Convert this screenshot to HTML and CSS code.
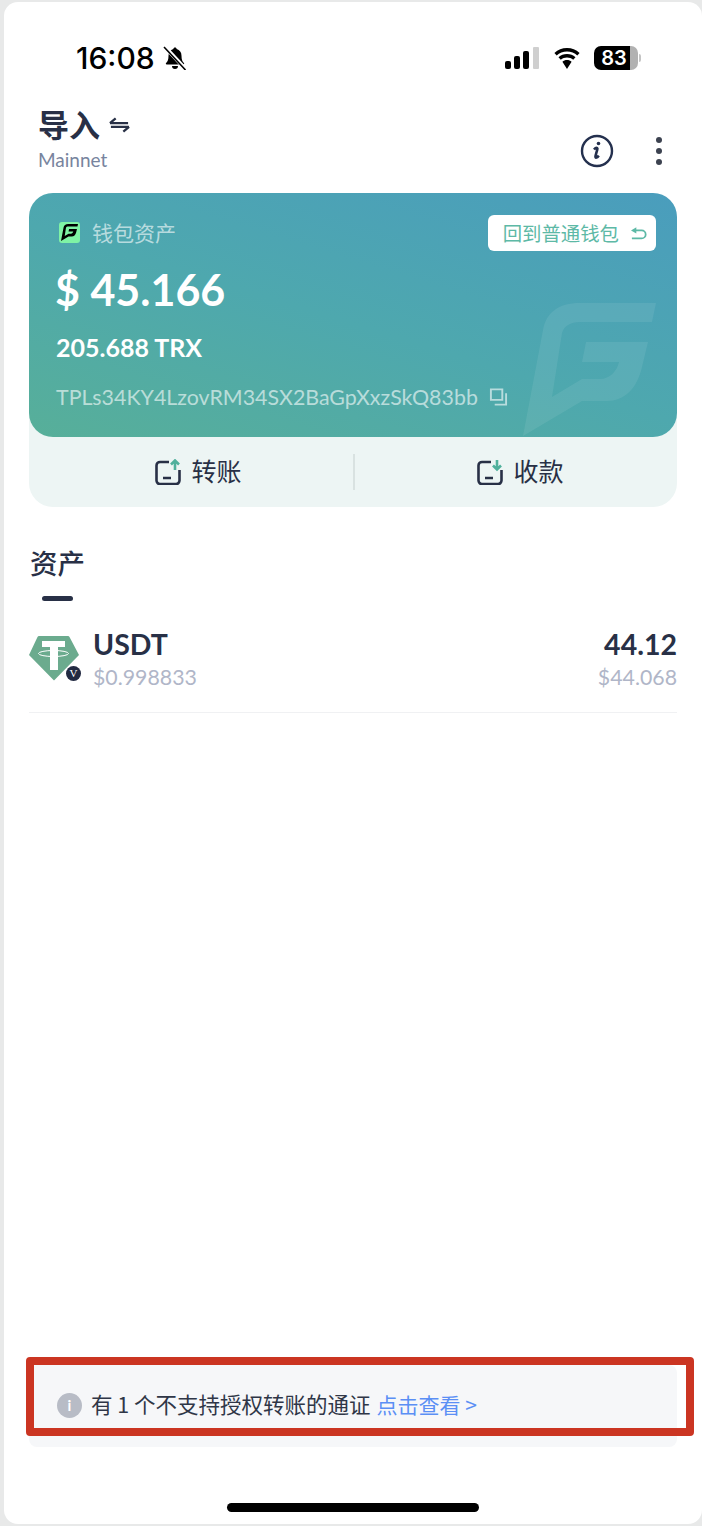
FILE: index.html
```html
<!DOCTYPE html>
<html lang="zh-CN">
<head>
<meta charset="utf-8">
<title>钱包资产</title>
<link rel="stylesheet" href="styles.css">
</head>
<body>
<main class="phone">
  <header class="status">
    <div class="status-left">
      <span class="time">16:08</span>
      <svg class="bell" viewBox="0 0 24 24"><path d="M12 1.500c-.9 0-1.600.7-1.700 1.600C7.300 3.900 5.500 6.500 5.500 9.800c0 3.700-.8 5.600-2.400 7.200-.6.600-.2 1.500.6 1.500h16.600c.8 0 1.200-.9.600-1.500-1.600-1.600-2.400-3.500-2.400-7.200 0-3.300-1.800-5.900-4.800-6.700-.1-.9-.8-1.600-1.700-1.600zM9 20a3 3 0 0 0 6 0z"/><path class="bell-gap" d="M2.500 1.500 22 22.500"/><path class="bell-line" d="M1 1l21.500 23"/></svg>
    </div>
    <div class="status-right">
      <svg class="signal" viewBox="0 0 34 22"><rect x="0" y="14" width="6" height="8" rx="2"/><rect x="9" y="9" width="6" height="13" rx="2"/><rect x="18" y="4" width="6" height="18" rx="2"/><rect class="signal-off" x="28" y="0" width="6" height="22" rx="1"/></svg>
      <svg class="wifi" viewBox="0 0 30 22"><path d="M15 4.500c4 0 7.600 1.500 10.300 4l2.300-2.600A18.500 18.500 0 0 0 15 1 18.500 18.500 0 0 0 2.400 5.900l2.300 2.600c2.700-2.500 6.300-4 10.300-4zM15 10.500c2.400 0 4.500.9 6.200 2.300l2.300-2.600A12.700 12.700 0 0 0 15 7a12.700 12.700 0 0 0-8.500 3.200l2.300 2.600c1.700-1.400 3.800-2.300 6.200-2.300zM15 13c-1.800 0-3.400.7-4.600 1.700L15 22l4.600-7.300C18.400 13.700 16.800 13 15 13z"/></svg>
      <div class="battery"><span class="battery-level">83</span><span class="battery-rest"></span><span class="battery-cap"></span></div>
    </div>
  </header>

  <section class="nav">
    <div class="nav-title">
      <h1 class="title">导入 <svg class="swap" viewBox="0 0 22 18"><path d="M1 7h19M1 7l6-5M21 11H2M21 11l-6 5"/></svg></h1>
      <p class="network">Mainnet</p>
    </div>
    <div class="nav-actions">
      <svg class="info" viewBox="0 0 34 34"><circle cx="17" cy="17" r="15"/><path class="info-i" d="M14 15.500c1-1.200 2.500-2 3.200-1.500.7.500.2 1.500-.3 3l-1.300 4.500c-.4 1.500 0 2.300.8 2.100.8-.2 1.600-1 2.400-2"/><circle class="info-dot" cx="18.500" cy="9.500" r="1.800"/></svg>
      <span class="dots"><i></i><i></i><i></i></span>
    </div>
  </section>

  <section class="wallet">
    <div class="wallet-card">
      <svg class="watermark" viewBox="0 0 133 133"><path d="M0 133 20 27C23 10 35 0 57 0H133L129 19H57C47 19 41 23 39 30L29 94 59 76H77C87 76 94 68 96 59H59L63 39H125L119 64C114 86 101 98 84 98H59Z"/></svg>
      <div class="card-top">
        <div class="card-label">
          <span class="logo"><svg viewBox="0 0 133 133"><path d="M0 133 20 27C23 10 35 0 57 0H133L129 19H57C47 19 41 23 39 30L29 94 59 76H77C87 76 94 68 96 59H59L63 39H125L119 64C114 86 101 98 84 98H59Z"/></svg></span>
          <span>钱包资产</span>
        </div>
        <div class="back-btn">回到普通钱包<svg class="back-icon" viewBox="0 0 18 14"><path class="back-stroke" d="M4 3.500h8a4.500 4.500 0 0 1 0 9H1"/><path class="back-fill" d="M0 3.500 6 0v7z"/></svg></div>
      </div>
      <div class="amount">$ 45.166</div>
      <div class="trx">205.688 TRX</div>
      <div class="address">TPLs34KY4LzovRM34SX2BaGpXxzSkQ83bb<svg class="copy" viewBox="0 0 20 18"><path d="M2 1h12v11H2z"/><path d="M18 5v12H6"/></svg></div>
    </div>
    <div class="actions">
      <div class="action action-send">
        <svg class="action-icon" viewBox="0 0 26 26"><path class="i-dark" d="M14 3H5a3.500 3.500 0 0 0-3.500 3.500v15A3.500 3.500 0 0 0 5 25h16a3.500 3.500 0 0 0 3.500-3.500V11M8 19h8"/><path class="i-green" d="M20 11V2M16 5.500 20 1.500l4 4"/></svg>
        <span>转账</span>
      </div>
      <div class="action action-receive">
        <svg class="action-icon" viewBox="0 0 26 26"><path class="i-dark" d="M14 3H5a3.500 3.500 0 0 0-3.500 3.500v15A3.500 3.500 0 0 0 5 25h16a3.500 3.500 0 0 0 3.500-3.500V11M8 19h8"/><path class="i-green" d="M20 1v9M16 6.500l4 4 4-4"/></svg>
        <span>收款</span>
      </div>
    </div>
  </section>

  <section class="assets">
    <h2 class="assets-tab">资产</h2>
    <span class="tab-bar"></span>
    <div class="asset-row">
      <div class="token">
        <svg class="token-icon" viewBox="0 0 50 46"><path class="t-bg" d="M10 1h29q1 0 1.500 1L50 20 25 45.500 0 20 8.500 2q.5-1 1.500-1z"/><path class="t-t" d="M13 6h23v6h-7v23h-8V12h-8z"/><ellipse class="t-ring" cx="24.500" cy="18.500" rx="15" ry="3"/></svg>
        <span class="badge">V</span>
      </div>
      <div class="asset-name">
        <div class="strong">USDT</div>
        <div class="muted">$0.998833</div>
      </div>
      <div class="asset-value">
        <div class="strong">44.12</div>
        <div class="muted">$44.068</div>
      </div>
    </div>
  </section>

  <aside class="notice">
    <span class="notice-i">i</span>
    <span class="notice-text">有 1 个不支持授权转账的通证</span>
    <span class="notice-link">点击查看 &gt;</span>
    <div class="highlight"></div>
  </aside>

  <div class="home"></div>
</main>
</body>
</html>
```
FILE: styles.css
```css
* { box-sizing: border-box; }
html, body { margin: 0; height: 100%; }
body {
  background: #e8e9e9;
  padding: 2px 0 2px 4px;
  font-family: "Lato", "Noto Sans CJK SC", sans-serif;
  color: #283046;
  overflow: hidden;
}
.phone {
  position: relative;
  height: 1522px;
  background: #fff;
  border-radius: 14px;
  display: flex;
  flex-direction: column;
  padding: 0 25px;
}
.status {
  display: flex;
  justify-content: space-between;
  align-items: center;
  height: 34px;
  margin-top: 39px;
  padding: 0 36px 0 47px;
}
.status-left, .status-right { display: flex; align-items: center; }
.time {
  font: 500 30px/34px "Inter", sans-serif;
  color: #000;
}
.bell { width: 24px; height: 24px; margin-left: 8px; }
.bell path { fill: #000; }
.bell .bell-gap { fill: none; stroke: #fff; stroke-width: 4; }
.bell .bell-line { fill: none; stroke: #000; stroke-width: 1.6; }
.signal { width: 34px; height: 22px; fill: #000; }
.signal-off { fill: #cfcfcf; }
.wifi { width: 30px; height: 22px; margin-left: 13px; fill: #000; }
.battery {
  display: flex;
  align-items: center;
  margin-left: 12px;
  height: 24px;
}
.battery-level {
  width: 36px;
  height: 24px;
  background: #000;
  color: #fff;
  border-radius: 7px 0 0 7px;
  font: 600 20px/24px "Inter", sans-serif;
  text-align: center;
  padding-left: 4px;
}
.battery-rest {
  width: 8px;
  height: 24px;
  background: #b1b1b1;
  border-radius: 0 7px 7px 0;
}
.battery-cap {
  width: 2px;
  height: 8px;
  margin-left: 1px;
  background: #c4c4c4;
  border-radius: 0 2px 2px 0;
}
.nav {
  display: flex;
  justify-content: space-between;
  align-items: flex-end;
  margin-top: 29px;
  padding: 0 15px 0 9px;
}
.title {
  margin: 0;
  display: flex;
  align-items: center;
  font: 700 31px/40px "Noto Sans CJK SC", sans-serif;
  color: #283046;
}
.swap {
  width: 21px;
  height: 18px;
  margin: 2px 0 0 9px;
  fill: none;
  stroke: #283046;
  stroke-width: 2.4;
}
.network {
  margin: 5px 0 0;
  font: 400 19px/22px "Lato", sans-serif;
  color: #78849e;
}
.nav-actions { display: flex; align-items: center; gap: 42px; padding: 0 0 3px; }
.info { width: 34px; height: 34px; fill: none; stroke: #24304e; stroke-width: 2.4; }
.info .info-i { stroke-width: 2.6; }
.info .info-dot { fill: #24304e; stroke: none; }
.dots { display: flex; flex-direction: column; gap: 5px; }
.dots i { width: 6px; height: 6px; border-radius: 50%; background: #3c4250; }
.wallet {
  margin-top: 22px;
  background: #edf5f4;
  border-radius: 24px;
}
.wallet-card {
  position: relative;
  height: 244px;
  padding: 22px 21px 0 26px;
  border-radius: 24px;
  color: #fff;
  overflow: hidden;
  background: linear-gradient(197deg, #4a9dbd 0%, #4ea8ae 52%, #57af99 100%);
}
.watermark {
  position: absolute;
  left: 494px;
  top: 110px;
  width: 133px;
  height: 133px;
  fill: rgba(255, 255, 255, 0.08);
}
.card-top { display: flex; justify-content: space-between; align-items: flex-start; }
.card-label {
  display: flex;
  align-items: center;
  gap: 12px;
  padding: 5px 0 0 4px;
  font: 400 21px/24px "Noto Sans CJK SC", sans-serif;
  color: rgba(255, 255, 255, 0.62);
}
.logo {
  display: flex;
  align-items: center;
  justify-content: center;
  width: 21px;
  height: 21px;
  background: #7ff3a5;
  border-radius: 3px;
}
.logo svg { width: 17px; height: 17px; fill: #000; }
.back-btn {
  display: flex;
  align-items: center;
  height: 36px;
  padding: 0 9px 0 15px;
  background: #fff;
  border-radius: 6px;
  color: #5db9a6;
  font: 400 19.400px/36px "Noto Sans CJK SC", sans-serif;
}
.back-icon { width: 16px; height: 13px; margin-left: 12px; }
.back-stroke { fill: none; stroke: #5db9a6; stroke-width: 2; }
.back-fill { fill: #5db9a6; }
.amount {
  margin-top: 11px;
  font: 700 43px/56px "Lato", sans-serif;
}
.trx {
  margin: 13px 0 0 1px;
  font: 700 25px/32px "Lato", sans-serif;
}
.address {
  display: flex;
  align-items: center;
  margin: 21px 0 0 1px;
  font: 400 21.400px/26px "Lato", sans-serif;
  color: rgba(255, 255, 255, 0.6);
}
.copy {
  width: 19px;
  height: 18px;
  margin-left: 11px;
  fill: none;
  stroke: rgba(255, 255, 255, 0.6);
  stroke-width: 2;
}
.actions { display: grid; grid-template-columns: 1fr 1fr; height: 70px; align-items: center; }
.action {
  display: flex;
  align-items: center;
  justify-content: center;
  gap: 10px;
  height: 36px;
  font: 400 25px/36px "Noto Sans CJK SC", sans-serif;
  color: #283046;
}
.action span { padding-bottom: 4px; }
.action-send { padding-left: 15px; }
.action-receive { padding-left: 9px; border-left: 2px solid #d9e2e1; }
.action-icon { width: 26px; height: 26px; fill: none; }
.i-dark { stroke: #283046; stroke-width: 2.6; }
.i-green { stroke: #4fb09c; stroke-width: 2.6; }
.assets { display: flex; flex-direction: column; margin-top: 35px; }
.assets-tab {
  margin: 0 0 0 1px;
  font: 500 27.500px/40px "Noto Sans CJK SC", sans-serif;
  color: #283046;
}
.tab-bar {
  width: 31px;
  height: 5px;
  margin: 14px 0 0 13px;
  background: #283046;
  border-radius: 3px;
}
.asset-row {
  display: flex;
  align-items: center;
  padding: 27px 0 22px;
  border-bottom: 1px solid #f0f1f3;
}
.token { position: relative; width: 50px; height: 46px; margin: -2px 14px 0 0; }
.token-icon { width: 50px; height: 46px; display: block; }
.t-bg { fill: #6bab8e; }
.t-t { fill: #fff; }
.t-ring { fill: none; stroke: #fff; stroke-width: 1; }
.badge {
  position: absolute;
  right: -2px;
  bottom: 0;
  width: 15px;
  height: 15px;
  border-radius: 50%;
  background: #222a42;
  color: #fff;
  font: 400 11px/15px "Liberation Serif", serif;
  text-align: center;
}
.asset-name { flex: 1; }
.asset-value { text-align: right; }
.strong { font: 700 28.500px/32px "Lato", sans-serif; color: #283046; }
.muted { margin-top: 4px; font: 400 21.300px/26px "Lato", sans-serif; color: #b0b6c8; }
.notice {
  position: relative;
  display: flex;
  align-items: center;
  height: 82px;
  margin-top: auto;
  margin-bottom: 77px;
  padding: 0 0 4px 28px;
  background: #f6f7f9;
  border-radius: 8px;
  font: 400 21.500px/28px "Noto Sans CJK SC", sans-serif;
}
.notice-i {
  width: 25px;
  height: 25px;
  margin: 2px 9px 0 0;
  border-radius: 50%;
  background: #b8bcc6;
  color: #fff;
  font: 700 15px/25px "Lato", sans-serif;
  text-align: center;
}
.notice-text { color: #2f3647; }
.notice-link { margin-left: 6px; font-size: 21px; color: #5b8ff5; }
.highlight {
  position: absolute;
  left: -3px;
  right: -17px;
  top: -8px;
  height: 79px;
  border: 8px solid #cb3522;
  border-radius: 4px;
}
.home {
  position: absolute;
  left: 223px;
  bottom: 12px;
  width: 252px;
  height: 9px;
  background: #000;
  border-radius: 5px;
}
```
